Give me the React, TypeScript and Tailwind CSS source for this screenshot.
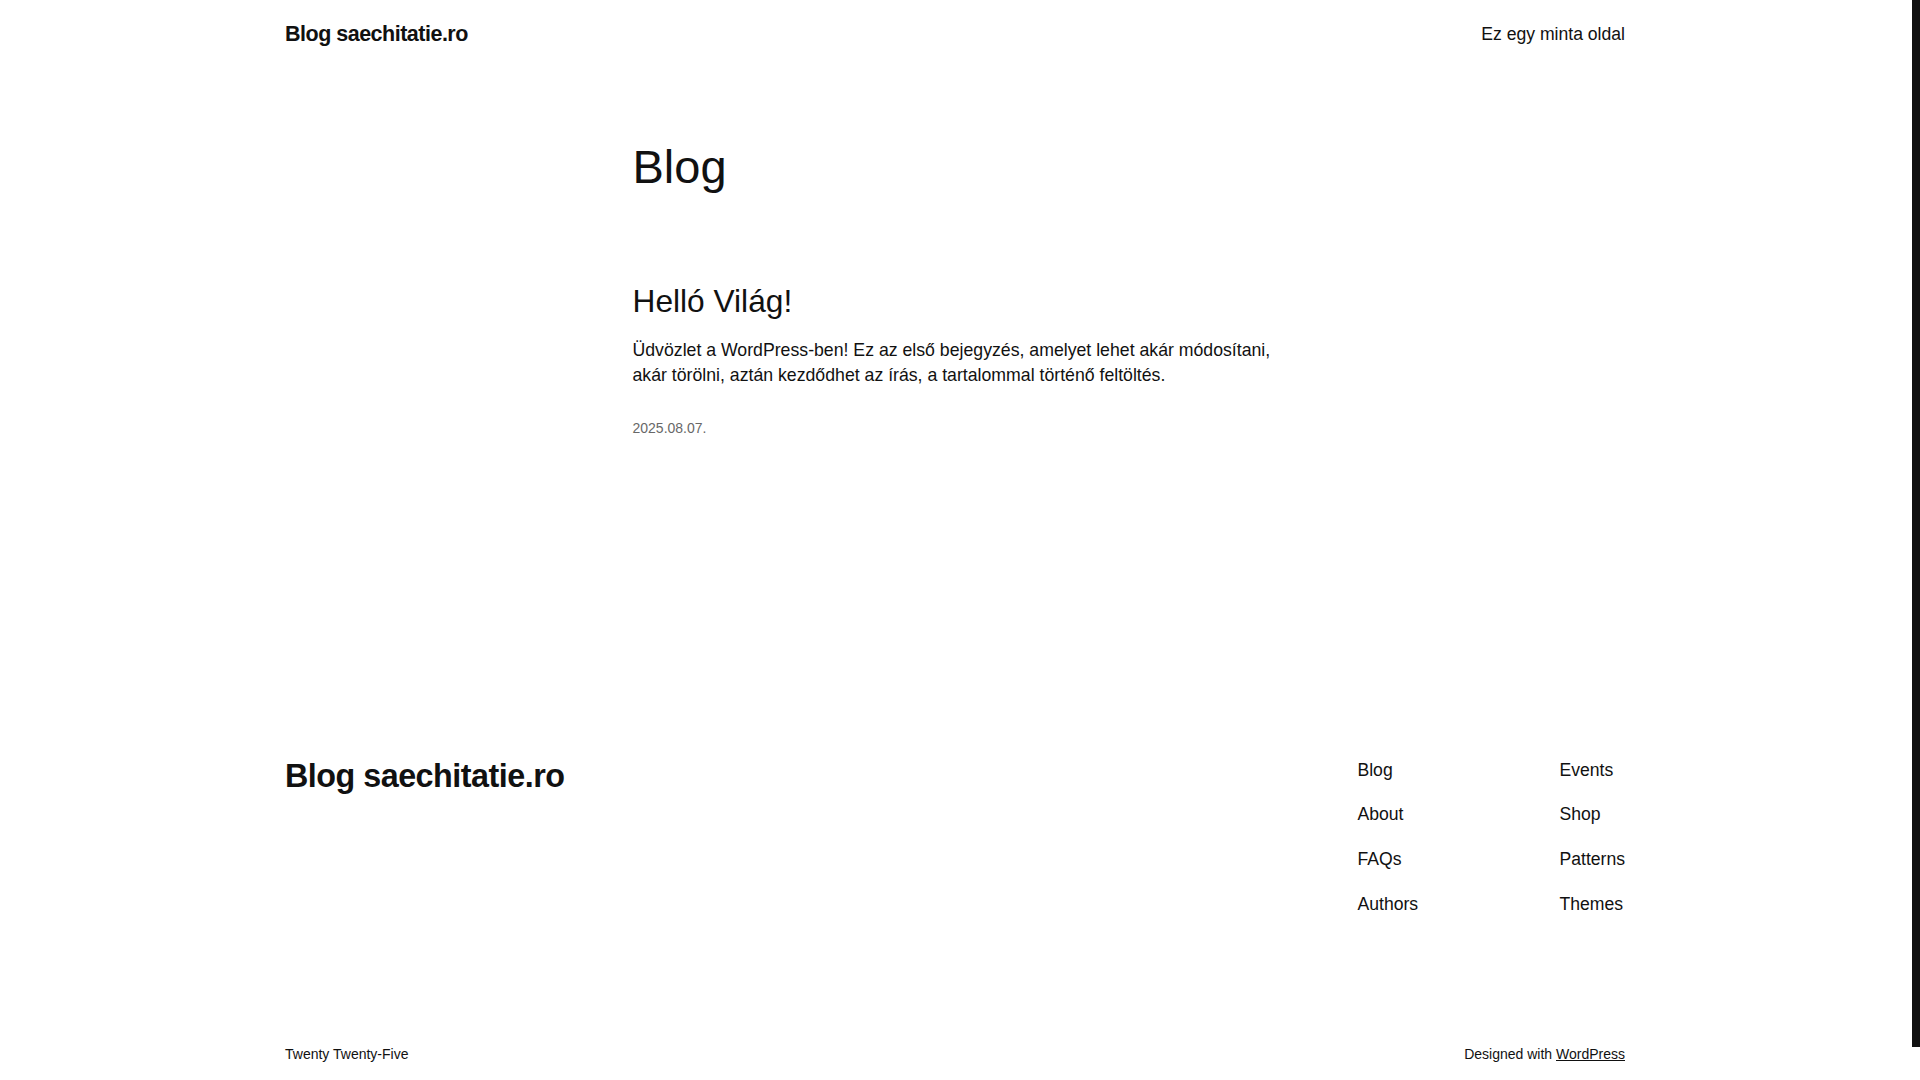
export default function App() {
  return (
    <div className="relative min-h-[1080px] pr-[10px] bg-white text-[#111111] font-['Liberation_Sans',Arial,sans-serif] flex flex-col overflow-hidden">
      <header className="mx-auto w-[1340px] h-[68px] flex items-center justify-between">
        <a href="#" className="text-[21.5px] font-bold tracking-[-0.5px] leading-[1.4]">
          Blog saechitatie.ro
        </a>
        <nav>
          <a href="#" className="text-[17.6px] leading-[1.4]">
            Ez egy minta oldal
          </a>
        </nav>
      </header>

      <main className="mx-auto w-[645px] flex flex-col">
        <h1 className="mt-[71px] text-[47px] leading-[1.2] font-normal">Blog</h1>
        <article className="mt-[86.5px] flex flex-col">
          <h2 className="text-[31.7px] leading-[1.2] font-normal">Helló Világ!</h2>
          <p className="mt-[18px] w-[660px] text-[17.7px] leading-[1.4]">
            Üdvözlet a WordPress-ben! Ez az első bejegyzés, amelyet lehet akár módosítani, akár
            törölni, aztán kezdődhet az írás, a tartalommal történő feltöltés.
          </p>
          <p className="mt-[31.5px] text-[14px] leading-[1.4] text-[#686868]">2025.08.07.</p>
        </article>
      </main>

      <footer className="mx-auto w-[1340px] mt-[318px] flex flex-col pb-[14px]">
        <div className="flex justify-between items-start">
          <a href="#" className="text-[32.3px] font-bold tracking-[-0.5px] leading-[1.2]">
            Blog saechitatie.ro
          </a>
          <div className="flex">
            <ul className="w-[202px] flex flex-col gap-[18.4px] text-[17.6px] leading-[1.5]">
              <li>Blog</li>
              <li>About</li>
              <li>FAQs</li>
              <li>Authors</li>
            </ul>
            <ul className="flex flex-col gap-[18.4px] text-[17.6px] leading-[1.5]">
              <li>Events</li>
              <li>Shop</li>
              <li>Patterns</li>
              <li>Themes</li>
            </ul>
          </div>
        </div>
        <div className="mt-[127.5px] flex justify-between text-[14px] leading-[1.4]">
          <p>Twenty Twenty-Five</p>
          <p>
            Designed with{" "}
            <a href="#" className="underline">
              WordPress
            </a>
          </p>
        </div>
      </footer>

      <div className="absolute right-0 top-0 w-[8px] h-[1047px] bg-[#111111]" />
    </div>
  );
}
